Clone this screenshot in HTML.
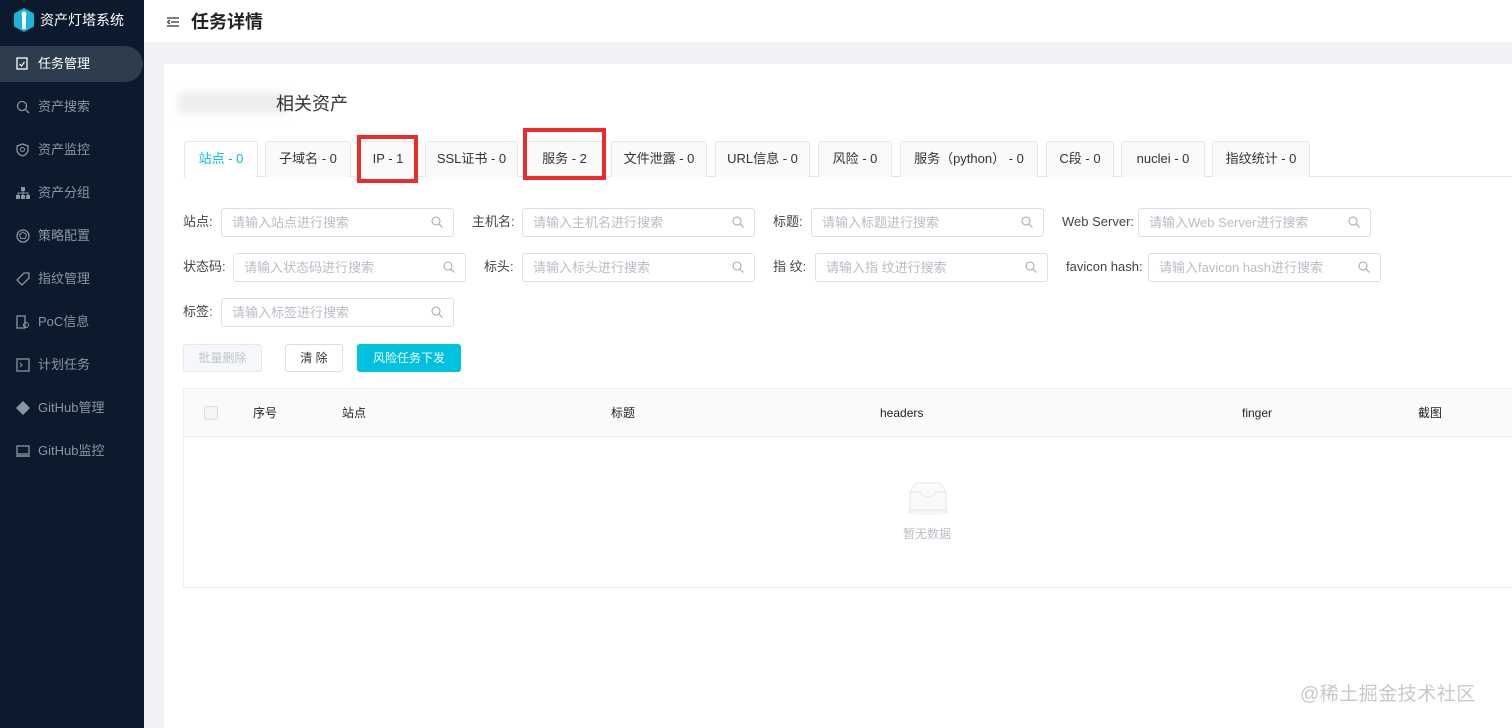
<!DOCTYPE html>
<html><head><meta charset="utf-8"><style>
*{margin:0;padding:0;box-sizing:border-box}
body{width:1512px;height:728px;overflow:hidden;background:#f0f2f5;font-family:"Liberation Sans","Noto Sans CJK SC",sans-serif;font-size:13px;color:#333;position:relative}
.a{position:absolute}
#side{left:0;top:0;width:144px;height:728px;background:#0b1a2c}
.mi{position:absolute;left:0;width:143px;height:36px;color:#8a96a3;font-size:13px;line-height:36px;padding-left:38px}
.mi svg{position:absolute;left:16px;top:11px}
.mi.act{background:#2e3d4d;color:#fff;border-radius:0 18px 18px 0}
#hdr{left:144px;top:0;width:1368px;height:42px;background:#fff}
#card{left:164px;top:64px;width:1348px;height:664px;background:#fff}
.tab{position:absolute;top:141px;height:36px;border:1px solid #e4e7ed;border-bottom:none;background:#fafafa;line-height:34px;text-align:center;font-size:13px;color:#333;border-radius:3px 3px 0 0}
.tab.on{background:#fff;color:#00bcd4;height:37px}
.lbl{position:absolute;font-size:13px;color:#444;line-height:28px}
.inp{position:absolute;height:29px;border:1px solid #dcdfe6;border-radius:3px;color:#b8bcc4;font-size:13px;line-height:27px;padding-left:10px}
.inp svg{position:absolute;right:10px;top:7px}
.red{position:absolute;border:4px solid #ee2b2b}
.th{position:absolute;top:404px;font-size:12px;color:#222;line-height:18px}
</style></head><body>
<div id="side" class="a">
 <svg class="a" style="left:12px;top:7px" width="24" height="26" viewBox="0 0 24 26"><path d="M12 1 L22 6.5 V19.5 L12 25 L2 19.5 V6.5Z" fill="#19b4d6"/><rect x="10" y="8" width="4" height="14" fill="#fff"/><circle cx="12" cy="7" r="2.5" fill="#fff"/></svg>
 <div class="a" style="left:40px;top:10px;color:#fff;font-size:14px;line-height:20px">资产灯塔系统</div>
 <div class="mi act" style="top:46px"><svg width="12" height="13"><rect x="1" y="1" width="10" height="11" fill="none" stroke="#fff" stroke-width="1.3"/><path d="M3.5 7l2 2 3-4" fill="none" stroke="#fff" stroke-width="1.2"/></svg>任务管理</div>
 <div class="mi" style="top:89px"><svg width="14" height="14"><circle cx="6" cy="6" r="4.5" fill="none" stroke="#8a96a3" stroke-width="1.3"/><path d="M9.5 9.5l3.5 3.5" stroke="#8a96a3" stroke-width="1.3"/></svg>资产搜索</div>
 <div class="mi" style="top:132px"><svg width="13" height="14"><path d="M6.5 1L12 3v4c0 3-2.5 5-5.5 6C3.5 12 1 10 1 7V3z" fill="none" stroke="#8a96a3" stroke-width="1.3"/><circle cx="6.5" cy="6.5" r="2" fill="none" stroke="#8a96a3"/></svg>资产监控</div>
 <div class="mi" style="top:175px"><svg width="14" height="14"><rect x="5" y="1" width="4" height="4" fill="#8a96a3"/><rect x="0" y="9" width="4" height="4" fill="#8a96a3"/><rect x="5" y="9" width="4" height="4" fill="#8a96a3"/><rect x="10" y="9" width="4" height="4" fill="#8a96a3"/><path d="M7 5v4M2 9V7h10v2" fill="none" stroke="#8a96a3"/></svg>资产分组</div>
 <div class="mi" style="top:218px"><svg width="14" height="14"><circle cx="7" cy="7" r="6" fill="none" stroke="#8a96a3" stroke-width="1.3"/><path d="M7 3l3.5 2.5-1.3 4H4.8L3.5 5.5z" fill="none" stroke="#8a96a3"/></svg>策略配置</div>
 <div class="mi" style="top:261px"><svg width="14" height="14"><path d="M8 1h5v5L6 13 1 8z" fill="none" stroke="#8a96a3" stroke-width="1.3"/></svg>指纹管理</div>
 <div class="mi" style="top:304px"><svg width="14" height="14"><path d="M1 1h8v12H1z" fill="none" stroke="#8a96a3" stroke-width="1.3"/><circle cx="10" cy="10" r="2.5" fill="none" stroke="#8a96a3"/></svg>PoC信息</div>
 <div class="mi" style="top:347px"><svg width="14" height="14"><rect x="1" y="1" width="12" height="12" fill="none" stroke="#8a96a3" stroke-width="1.3"/><path d="M4 5l2 2-2 2" fill="none" stroke="#8a96a3"/></svg>计划任务</div>
 <div class="mi" style="top:390px"><svg width="14" height="14"><path d="M7 0l7 7-7 7-7-7z" fill="#8a96a3"/></svg>GitHub管理</div>
 <div class="mi" style="top:433px"><svg width="14" height="14"><rect x="1" y="2" width="12" height="8" fill="none" stroke="#8a96a3" stroke-width="1.3"/><path d="M0 12h14" stroke="#8a96a3" stroke-width="1.5"/></svg>GitHub监控</div>
</div>
<div id="hdr" class="a">
 <svg class="a" style="left:23px;top:17px" width="12" height="10"><path d="M0 1h12M4 5h8M0 9h12M3 3L0.5 5 3 7" fill="none" stroke="#333" stroke-width="1.2"/></svg>
 <div class="a" style="left:47px;top:10px;font-size:18px;font-weight:bold;color:#222;line-height:24px">任务详情</div>
</div>
<div id="card" class="a"></div>
<div class="a" style="left:178px;top:92px;width:110px;height:22px;background:#eee;filter:blur(4px)"></div>
<div class="a" style="left:276px;top:92px;font-size:18px;color:#333;line-height:24px">相关资产</div>
<div class="a" style="left:183px;top:176px;width:1329px;height:1px;background:#e4e7ed"></div>
<div class="tab on" style="left:184px;width:74px">站点 - 0</div>
<div class="tab" style="left:265px;width:86px">子域名 - 0</div>
<div class="tab" style="left:358px;width:60px">IP - 1</div>
<div class="tab" style="left:425px;width:93px">SSL证书 - 0</div>
<div class="tab" style="left:525px;width:79px">服务 - 2</div>
<div class="tab" style="left:611px;width:96px">文件泄露 - 0</div>
<div class="tab" style="left:715px;width:95px">URL信息 - 0</div>
<div class="tab" style="left:818px;width:74px">风险 - 0</div>
<div class="tab" style="left:900px;width:138px">服务（python） - 0</div>
<div class="tab" style="left:1046px;width:68px">C段 - 0</div>
<div class="tab" style="left:1121px;width:84px">nuclei - 0</div>
<div class="tab" style="left:1212px;width:98px">指纹统计 - 0</div>
<div class="red" style="left:357px;top:135px;width:61px;height:48px"></div>
<div class="red" style="left:523px;top:128px;width:83px;height:52px"></div>

<div class="lbl" style="left:183px;top:208px">站点:</div>
<div class="inp" style="left:221px;top:208px;width:233px">请输入站点进行搜索<svg width="12" height="12"><circle cx="5" cy="5" r="4" fill="none" stroke="#aaa" stroke-width="1.1"/><path d="M8 8l3.5 3.5" stroke="#aaa" stroke-width="1.1"/></svg></div>
<div class="lbl" style="left:472px;top:208px">主机名:</div>
<div class="inp" style="left:522px;top:208px;width:233px">请输入主机名进行搜索<svg width="12" height="12"><circle cx="5" cy="5" r="4" fill="none" stroke="#aaa" stroke-width="1.1"/><path d="M8 8l3.5 3.5" stroke="#aaa" stroke-width="1.1"/></svg></div>
<div class="lbl" style="left:773px;top:208px">标题:</div>
<div class="inp" style="left:811px;top:208px;width:233px">请输入标题进行搜索<svg width="12" height="12"><circle cx="5" cy="5" r="4" fill="none" stroke="#aaa" stroke-width="1.1"/><path d="M8 8l3.5 3.5" stroke="#aaa" stroke-width="1.1"/></svg></div>
<div class="lbl" style="left:1062px;top:208px">Web Server:</div>
<div class="inp" style="left:1138px;top:208px;width:233px">请输入Web Server进行搜索<svg width="12" height="12"><circle cx="5" cy="5" r="4" fill="none" stroke="#aaa" stroke-width="1.1"/><path d="M8 8l3.5 3.5" stroke="#aaa" stroke-width="1.1"/></svg></div>

<div class="lbl" style="left:183px;top:253px">状态码:</div>
<div class="inp" style="left:233px;top:253px;width:233px">请输入状态码进行搜索<svg width="12" height="12"><circle cx="5" cy="5" r="4" fill="none" stroke="#aaa" stroke-width="1.1"/><path d="M8 8l3.5 3.5" stroke="#aaa" stroke-width="1.1"/></svg></div>
<div class="lbl" style="left:484px;top:253px">标头:</div>
<div class="inp" style="left:522px;top:253px;width:233px">请输入标头进行搜索<svg width="12" height="12"><circle cx="5" cy="5" r="4" fill="none" stroke="#aaa" stroke-width="1.1"/><path d="M8 8l3.5 3.5" stroke="#aaa" stroke-width="1.1"/></svg></div>
<div class="lbl" style="left:773px;top:253px">指 纹:</div>
<div class="inp" style="left:815px;top:253px;width:233px">请输入指 纹进行搜索<svg width="12" height="12"><circle cx="5" cy="5" r="4" fill="none" stroke="#aaa" stroke-width="1.1"/><path d="M8 8l3.5 3.5" stroke="#aaa" stroke-width="1.1"/></svg></div>
<div class="lbl" style="left:1066px;top:253px">favicon hash:</div>
<div class="inp" style="left:1148px;top:253px;width:233px">请输入favicon hash进行搜索<svg width="12" height="12"><circle cx="5" cy="5" r="4" fill="none" stroke="#aaa" stroke-width="1.1"/><path d="M8 8l3.5 3.5" stroke="#aaa" stroke-width="1.1"/></svg></div>

<div class="lbl" style="left:183px;top:298px">标签:</div>
<div class="inp" style="left:221px;top:298px;width:233px">请输入标签进行搜索<svg width="12" height="12"><circle cx="5" cy="5" r="4" fill="none" stroke="#aaa" stroke-width="1.1"/><path d="M8 8l3.5 3.5" stroke="#aaa" stroke-width="1.1"/></svg></div>

<div class="a" style="left:183px;top:344px;width:79px;height:28px;border:1px solid #e4e7ed;background:#f5f7fa;border-radius:3px;color:#c0c4cc;font-size:12px;line-height:26px;text-align:center">批量删除</div>
<div class="a" style="left:285px;top:344px;width:58px;height:28px;border:1px solid #dcdfe6;background:#fff;border-radius:3px;color:#333;font-size:12px;line-height:26px;text-align:center">清 除</div>
<div class="a" style="left:357px;top:344px;width:104px;height:28px;background:#00c1de;border-radius:3px;color:#fff;font-size:12px;line-height:28px;text-align:center">风险任务下发</div>

<div class="a" style="left:183px;top:388px;width:1329px;height:200px;border:1px solid #ebeef5;border-right:none"></div>
<div class="a" style="left:184px;top:389px;width:1328px;height:48px;background:#fafafa;border-bottom:1px solid #ebeef5"></div>
<div class="a" style="left:204px;top:406px;width:14px;height:14px;border:1px solid #dcdfe6;background:#f5f5f5;border-radius:2px"></div>
<div class="th" style="left:253px">序号</div>
<div class="th" style="left:342px">站点</div>
<div class="th" style="left:611px">标题</div>
<div class="th" style="left:880px">headers</div>
<div class="th" style="left:1177px;width:160px;text-align:center">finger</div>
<div class="th" style="left:1418px">截图</div>
<svg class="a" style="left:904px;top:480px" width="48" height="36" viewBox="0 0 48 36"><ellipse cx="24" cy="32" rx="22" ry="3" fill="#f5f5f5"/><path d="M6 12 L12 3 H36 L42 12 V30 H6Z" fill="#fafafa" stroke="#e6e6e6"/><path d="M6 12 H17 Q17 17 24 17 Q31 17 31 12 H42" fill="none" stroke="#e6e6e6"/></svg>
<div class="a" style="left:903px;top:526px;font-size:12px;color:#b8bcc4;line-height:16px">暂无数据</div>
<div class="a" style="left:1300px;top:683px;font-size:19px;color:#c8c8c8;line-height:24px;letter-spacing:0.5px">@稀土掘金技术社区</div>
</body></html>
